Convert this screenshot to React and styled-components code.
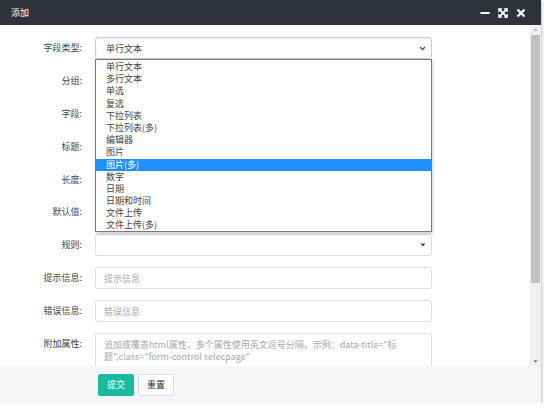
import React from 'react'
import styled, { createGlobalStyle } from 'styled-components'

const GlobalStyle = createGlobalStyle`
  html, body {
    margin: 0;
    padding: 0;
    background: #fff;
  }
  body {
    font-family: "Noto Sans CJK SC", "Noto Sans", sans-serif;
    font-size: 9px;
    color: #333;
  }
  * { box-sizing: border-box; }
`

const types = [
  '单行文本', '多行文本', '单选', '复选', '下拉列表', '下拉列表(多)', '编辑器',
  '图片', '图片(多)', '数字', '日期', '日期和时间', '文件上传', '文件上传(多)',
]

const fields = [
  { label: '分组' },
  { label: '字段' },
  { label: '标题' },
  { label: '长度' },
  { label: '默认值' },
  { label: '规则', select: true },
  { label: '提示信息', placeholder: '提示信息' },
  { label: '错误信息', placeholder: '错误信息' },
]

const App = () => {
  return (
    <>
      <GlobalStyle />
      <Window>
        <Header>
          <span>添加</span>
          <Tools>
            <svg width="10" height="10" viewBox="0 0 10 10">
              <rect x="0.5" y="4" width="9" height="2" fill="#fff" />
            </svg>
            <svg width="10" height="10" viewBox="0 0 10 10" fill="#fff" stroke="#fff">
              <path d="M2.2 2.2 L7.8 7.8 M7.8 2.2 L2.2 7.8" strokeWidth="1.8" />
              <path d="M0.5 0.5 H4 L0.5 4 Z M9.5 0.5 V4 L6 0.5 Z M0.5 9.5 V6 L4 9.5 Z M9.5 9.5 H6 L9.5 6 Z" strokeWidth="0.6" />
            </svg>
            <svg width="10" height="10" viewBox="0 0 10 10">
              <path d="M1.5 1.5 L8.5 8.5 M8.5 1.5 L1.5 8.5" stroke="#fff" strokeWidth="2.3" />
            </svg>
          </Tools>
        </Header>
        <Body>
          <Content>
            <Row>
              <Label>字段类型:</Label>
              <Select $focus>
                <span>单行文本</span>
                <svg width="7" height="5" viewBox="0 0 7 5">
                  <path d="M1 1 L3.5 3.5 L6 1" fill="none" stroke="#555" strokeWidth="1.3" />
                </svg>
              </Select>
            </Row>
            {fields.map((f) => (
              <Row key={f.label}>
                <Label>{f.label}:</Label>
                {f.select ? (
                  <Select>
                    <span />
                    <svg width="6" height="4" viewBox="0 0 6 4">
                      <path d="M0.5 0.5 H5.5 L3 3.5 Z" fill="#444" />
                    </svg>
                  </Select>
                ) : (
                  <Input placeholder={f.placeholder || ''} />
                )}
              </Row>
            ))}
            <Row $top>
              <Label $pad>附加属性:</Label>
              <TextArea
                placeholder={'追加或覆盖html属性，多个属性使用英文逗号分隔，示例：data-title="标\n题",class="form-control selecpage"'}
              />
            </Row>
            <Menu>
              {types.map((t) => (
                <Option key={t} $active={t === '图片(多)'}>{t}</Option>
              ))}
            </Menu>
          </Content>
          <ScrollBar>
            <svg width="11" height="9" viewBox="0 0 11 9">
              <path d="M3.5 5.5 L5.5 3.5 L7.5 5.5 Z" fill="#a3a3a3" />
            </svg>
            <Thumb />
            <Track />
            <svg width="11" height="9" viewBox="0 0 11 9">
              <path d="M3.5 3.5 L5.5 5.5 L7.5 3.5 Z" fill="#505050" />
            </svg>
          </ScrollBar>
        </Body>
        <Footer>
          <Button $primary>提交</Button>
          <Button>重置</Button>
        </Footer>
      </Window>
    </>
  )
}

const Window = styled.div`
  width: 541px;
  height: 403px;
  display: flex;
  flex-direction: column;
  background: #fff;
  box-shadow: 1px 1px 3px rgba(0, 0, 0, 0.25);
  overflow: hidden;
`

const Header = styled.div`
  height: 25px;
  flex: none;
  background: #2f3238;
  color: #fff;
  display: flex;
  align-items: center;
  justify-content: space-between;
  padding: 0 15px 0 11px;
  font-size: 9px;
`

const Tools = styled.div`
  display: flex;
  align-items: center;
  gap: 8px;
  svg { display: block; }
`

const Body = styled.div`
  height: 341px;
  flex: none;
  display: flex;
`

const Content = styled.div`
  flex: 1;
  position: relative;
  overflow: hidden;
  padding-top: 12px;
  display: flex;
  flex-direction: column;
  gap: 10.9px;
`

const Row = styled.div`
  display: grid;
  grid-template-columns: 82px 337px;
  column-gap: 13px;
  height: ${(p) => (p.$top ? 'auto' : '22px')};
  flex: none;
  align-items: ${(p) => (p.$top ? 'start' : 'center')};
`

const Label = styled.label`
  text-align: right;
  color: #444;
  font-size: 9px;
  line-height: 12px;
  padding-top: ${(p) => (p.$pad ? '5px' : '0')};
`

const Select = styled.div`
  height: 22px;
  border: 1px solid ${(p) => (p.$focus ? '#c8ccd2' : '#dcdfe3')};
  border-radius: 3px;
  display: flex;
  align-items: center;
  justify-content: space-between;
  padding: 0 5px 0 10px;
  color: #444;
  font-size: 9px;
  box-shadow: ${(p) => (p.$focus ? 'inset 0 1px 2px rgba(0,0,0,0.08)' : 'none')};
  svg { display: block; }
`

const Input = styled.input`
  height: 22px;
  border: 1px solid #dcdfe3;
  border-radius: 3px;
  padding: 0 8px;
  margin: 0;
  font-family: inherit;
  font-size: 9px;
  outline: none;
  &::placeholder { color: #a5a8ad; }
`

const TextArea = styled.textarea`
  height: 48px;
  margin: 0;
  border: 1px solid #dcdfe3;
  border-radius: 3px;
  padding: 5px 8px;
  font-family: inherit;
  font-size: 9px;
  line-height: 12px;
  resize: none;
  outline: none;
  &::placeholder { color: #a5a8ad; }
`

const Menu = styled.div`
  position: absolute;
  top: 34px;
  left: 95px;
  width: 337px;
  height: 173px;
  background: #fff;
  border: 1px solid #7a7a7a;
  box-shadow: 1px 2px 3px rgba(0, 0, 0, 0.2);
  padding-top: 1px;
  display: flex;
  flex-direction: column;
`

const Option = styled.div`
  height: 12.2px;
  line-height: 12.2px;
  padding-left: 10px;
  font-size: 9px;
  color: ${(p) => (p.$active ? '#fff' : '#444')};
  background: ${(p) => (p.$active ? '#1e90ff' : 'transparent')};
`

const ScrollBar = styled.div`
  width: 11px;
  flex: none;
  background: #f1f1f1;
  display: flex;
  flex-direction: column;
  svg { display: block; flex: none; }
`

const Thumb = styled.div`
  height: 248px;
  margin: 1px 1px 0;
  background: #c1c1c1;
`

const Track = styled.div`
  flex: 1;
`

const Footer = styled.div`
  height: 37px;
  flex: none;
  background: #f5f6f8;
  display: flex;
  align-items: center;
  gap: 4px;
  padding-left: 98px;
`

const Button = styled.button`
  height: 22px;
  padding: 0 8px;
  border-radius: 2px;
  border: 1px solid ${(p) => (p.$primary ? '#18bc9c' : '#dddddd')};
  background: ${(p) => (p.$primary ? '#18bc9c' : '#fff')};
  color: ${(p) => (p.$primary ? '#fff' : '#333')};
  font-family: inherit;
  font-size: 9px;
  cursor: pointer;
`

export default App
